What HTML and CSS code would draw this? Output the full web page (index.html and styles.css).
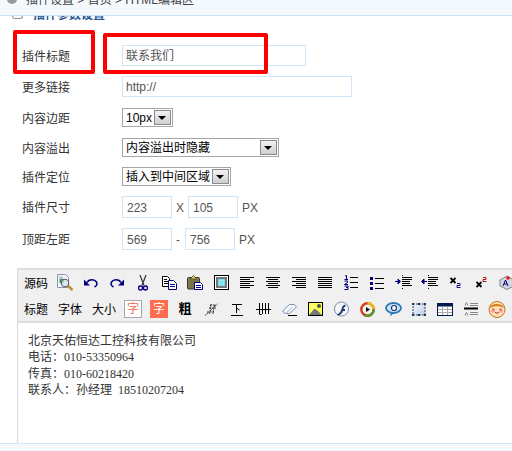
FILE: index.html
```html
<!DOCTYPE html>
<html lang="zh">
<head>
<meta charset="utf-8">
<title>HTML编辑区</title>
<link rel="stylesheet" href="styles.css">
</head>
<body>
<div class="page">
  <header class="crumb"><span class="crumb-dot"></span><span class="crumb-text">插件设置 &gt; 首页 &gt; HTML编辑区</span></header>
  <div class="section"><span class="section-dot"></span><span class="section-text">插件参数设置</span></div>
  <form class="form">
    <div class="row row-title"><label class="lab">插件标题</label><span class="inp w184">联系我们</span></div>
    <div class="row row-link"><label class="lab">更多链接</label><span class="inp w230">http://</span></div>
    <div class="row row-pad"><label class="lab">内容边距</label><span class="sel w51"><span class="sel-v">10px</span><span class="sel-b"></span></span></div>
    <div class="row row-over"><label class="lab">内容溢出</label><span class="sel w157"><span class="sel-v">内容溢出时隐藏</span><span class="sel-b"></span></span></div>
    <div class="row row-pos"><label class="lab">插件定位</label><span class="sel w109"><span class="sel-v">插入到中间区域</span><span class="sel-b"></span></span></div>
    <div class="row row-size"><label class="lab">插件尺寸</label><span class="inp w50 tall">223</span><span class="sep sep-x">X</span><span class="inp w50 tall">105</span><span class="unit">PX</span></div>
    <div class="row row-top"><label class="lab">顶距左距</label><span class="inp w50 tall">569</span><span class="sep sep-d">-</span><span class="inp w50 tall">756</span><span class="unit">PX</span></div>
  </form>
  <section class="editor">
    <div class="toolbar">
      <div class="tb-row">
        <span class="tw">源码</span>
        <span class="ic first"><svg width="17" height="17" viewBox="0 0 17 17"><path d="M.5.5h8l3 3v10H.500z" fill="#f4f6fa" stroke="#8a94a8"/><path d="M2 3h4M2 5h3" stroke="#9aa4b8"/><circle cx="5" cy="7" r="2.600" fill="#3c9a5c"/><circle cx="8" cy="9" r="3.800" fill="#d8e8f4" fill-opacity=".75" stroke="#556"/><path d="M11 12l4.500 4" stroke="#c08a2c" stroke-width="2.400"/></svg></span>
        <span class="ic"><svg width="14" height="10" viewBox="0 0 14 10"><path d="M0 1.500v6h6z" fill="#000080"/><path d="M3 4.500c2-3.500 7.500-3.500 9.500-.5 1 1.800 0 3.800-2 5" fill="none" stroke="#000080" stroke-width="1.500"/></svg></span>
        <span class="ic"><svg width="14" height="10" viewBox="0 0 14 10"><path d="M14 1.500v6H8z" fill="#000080"/><path d="M11 4.500C9 1 3.500 1 1.500 4c-1 1.800 0 3.800 2 5" fill="none" stroke="#000080" stroke-width="1.500"/></svg></span>
        <span class="ic"><svg width="10" height="16" viewBox="0 0 10 16"><path d="M2 0l4 10.500M8 0L4 10.500" stroke="#333" stroke-width="1.200" fill="none"/><circle cx="2.500" cy="13" r="2" fill="none" stroke="#000080" stroke-width="1.400"/><circle cx="7.500" cy="13" r="2" fill="none" stroke="#000080" stroke-width="1.400"/></svg></span>
        <span class="ic"><svg width="15" height="14" viewBox="0 0 15 14"><path d="M.5.500h5l2 2v8H.5z" fill="#fff" stroke="#000"/><path d="M2 3.500h3M2 5.500h4M2 7.500h4" stroke="#000"/><path d="M6.500 4.500h5l3 3v6h-8z" fill="#fff" stroke="#000080"/><path d="M8 8.500h5M8 10.500h5" stroke="#000080"/></svg></span>
        <span class="ic"><svg width="16" height="15" viewBox="0 0 16 15"><rect x=".5" y="2.500" width="12" height="11.500" rx="1" fill="#8a7f4a" stroke="#333"/><path d="M2 4h9v9H2z" fill="#6e6a40" opacity=".6"/><path d="M4 3L6.500.5 9 3v1H4z" fill="#e8d040" stroke="#333" stroke-width=".7"/><path d="M7.500 7.500h6l2 2v5h-8z" fill="#fff" stroke="#000080"/><path d="M9 10.500h5M9 12.500h5" stroke="#000080"/></svg></span>
        <span class="ic"><svg width="15" height="15" viewBox="0 0 15 15"><rect x=".5" y=".5" width="14" height="14" fill="#fff" stroke="#000"/><rect x="2" y="2" width="11" height="11" fill="#777"/><rect x="4" y="4" width="7" height="7" fill="#3fd8e8"/><path d="M4 5.500h7M4 7.500h7M4 9.500h7M5.500 4v7M7.500 4v7M9.500 4v7" stroke="#c8f4f8" stroke-width=".6"/></svg></span>
        <span class="ic"><svg width="14" height="12" viewBox="0 0 14 12"><path d="M0 .5h14M0 2.500h10M0 4.500h14M0 6.500h10M0 8.500h14M0 10.500h10" stroke="#000" fill="none"/></svg></span>
        <span class="ic"><svg width="14" height="12" viewBox="0 0 14 12"><path d="M0 .5h14M2 2.500h10M0 4.500h14M2 6.500h10M0 8.500h14M2 10.500h10" stroke="#000" fill="none"/></svg></span>
        <span class="ic"><svg width="14" height="12" viewBox="0 0 14 12"><path d="M0 .5h14M4 2.500h10M0 4.500h14M4 6.500h10M0 8.500h14M4 10.500h10" stroke="#000" fill="none"/></svg></span>
        <span class="ic"><svg width="14" height="12" viewBox="0 0 14 12"><path d="M0 .5h14M0 2.500h14M0 4.500h14M0 6.500h14M0 8.500h14M0 10.500h14" stroke="#000" fill="none"/></svg></span>
        <span class="ic"><svg width="14" height="15" viewBox="0 0 14 15"><path d="M6 2.500h8M6 7.500h8M6 12.500h8" stroke="#000"/><path d="M1 1l1.500-.5V4M.5 4.500h3.500M.5 6H3.500V7.500L.5 9.500h3.500M.5 11h3.500v1.500H2M4 12.500v2H.5" stroke="#000080" fill="none"/></svg></span>
        <span class="ic"><svg width="14" height="14" viewBox="0 0 14 14"><path d="M5 2.500h9M5 7.500h9M5 12.500h9" stroke="#000"/><rect y="1" width="3" height="3" fill="#000080"/><rect y="6" width="3" height="3" fill="#000080"/><rect y="11" width="3" height="3" fill="#000080"/></svg></span>
        <span class="ic"><svg width="17" height="15" viewBox="0 0 17 15"><path d="M7.500 0v2M7.500 13v2" stroke="#000" stroke-dasharray="1"/><path d="M7 2.500h10M7 4.500h10M7 6.500h8M7 8.500h8M7 10.500h10" stroke="#000"/><path d="M0 6.500h4M3 4l2.500 2.500L3 9z" fill="#000080" stroke="#000080"/></svg></span>
        <span class="ic"><svg width="17" height="15" viewBox="0 0 17 15"><path d="M7.500 0v2M7.500 13v2" stroke="#000" stroke-dasharray="1"/><path d="M7 2.500h10M7 4.500h10M7 6.500h8M7 8.500h8M7 10.500h10" stroke="#000"/><path d="M6 6.500H2M3 4L.5 6.500 3 9z" fill="#000080" stroke="#000080"/></svg></span>
        <span class="ic"><svg width="11" height="11" viewBox="0 0 11 11"><path d="M.5 1l5 5M5.500 1l-5 5" stroke="#000" stroke-width="1.800"/><path d="M7 6.500h3V8.500H7V10.500h3.500" stroke="#000080" stroke-width=".9" fill="none"/></svg></span>
        <span class="ic"><svg width="11" height="11" viewBox="0 0 11 11"><path d="M.5 5l5 5M5.500 5l-5 5" stroke="#000" stroke-width="1.800"/><path d="M7 .5h3v2H7v2h3.500" stroke="#a00000" stroke-width=".9" fill="none"/></svg></span>
        <span class="ic"><svg width="16" height="15" viewBox="0 0 16 15"><path d="M1 5l7-4 7 4v6l-7 3.500L1 11z" fill="#d4d4e0" stroke="#888"/><path d="M4 11l2.500-6L9 11M5 9h3" stroke="#000080" fill="none"/><circle cx="9" cy="3" r="1.800" fill="#e01818"/></svg></span>
      </div>
      <div class="tb-row">
        <span class="tw">标题</span>
        <span class="tw">字体</span>
        <span class="tw">大小</span>
        <span class="ic box-cell first2"><span class="zi zi-o">字</span></span>
        <span class="ic box-cell"><span class="zi zi-f">字</span></span>
        <span class="ic"><b class="cu">粗</b></span>
        <span class="ic"><svg width="13" height="13" viewBox="0 0 13 13"><path d="M0 12.500L4 9M5.500 7.500L12.500 1M5 2h6M4 5h7M2 9h7M6 1.500L4.500 11M9.500 2L8 11" stroke="#222" stroke-width=".9" stroke-dasharray="2 .7" fill="none"/></svg></span>
        <span class="ic"><svg width="12" height="13" viewBox="0 0 12 13"><path d="M1 1.500h10M5.500 1.500v8.500M5.500 5l3 2M0 12.500h12" stroke="#000" fill="none"/></svg></span>
        <span class="ic"><svg width="15" height="12" viewBox="0 0 15 12"><path d="M3.500 0v11M6.500 0v11M9.500 0v11M12.500 0v11M0 6.500h15M3.500 11.500h2" stroke="#000" fill="none"/></svg></span>
        <span class="ic"><svg width="15" height="13" viewBox="0 0 15 13"><path d="M.5 8l7-6.500 5 0 2 2.500-7 6.500H3z" fill="#f2f5fa" stroke="#7a94b4"/><path d="M.5 8l3 3L10 4.500" fill="none" stroke="#9ab0c8"/><path d="M6 12.500h9" stroke="#000"/></svg></span>
        <span class="ic"><svg width="15" height="14" viewBox="0 0 15 14"><rect x=".5" y=".5" width="14" height="13" fill="#ffff60" stroke="#000"/><circle cx="11" cy="4" r="2" fill="#554"/><path d="M1 13l5.500-6.500L10 9l4 4z" fill="#777"/></svg></span>
        <span class="ic"><svg width="15" height="16" viewBox="0 0 15 16"><circle cx="7.500" cy="8" r="7" fill="#f4f6fa" stroke="#7a90a8"/><path d="M3.500 13c2.500-.5 3.500-3 4-5 .5-2.500 1.500-4 4-4.500v2C10 6 9.500 7 9.500 8H11v2H9c-.8 2.500-2.500 4-5.500 4.500z" fill="#1a3a70"/></svg></span>
        <span class="ic"><svg width="15" height="15" viewBox="0 0 15 15"><circle cx="7.500" cy="7.500" r="6.200" fill="none" stroke="#d83a18" stroke-width="2.400"/><path d="M7.500 1.300a6.200 6.200 0 0 1 6.200 6.200" fill="none" stroke="#f0b818" stroke-width="2.400"/><path d="M13.700 7.500A6.200 6.200 0 0 1 5 13.200" fill="none" stroke="#48a030" stroke-width="2.400"/><circle cx="7.500" cy="7.500" r="4.300" fill="#f4f4ec"/><path d="M6 5l4 2.500L6 10z" fill="#111"/></svg></span>
        <span class="ic"><svg width="17" height="15" viewBox="0 0 17 15"><ellipse cx="8.500" cy="6" rx="7.500" ry="5" fill="#cfe2f2" stroke="#2a78b8" stroke-width="1.800"/><circle cx="9" cy="6" r="2.500" fill="#fff" stroke="#123a70" stroke-width="1.200"/><path d="M6 10l-1 4.500 4.500-4z" fill="#2a78b8"/></svg></span>
        <span class="ic"><svg width="16" height="15" viewBox="0 0 16 15"><defs><linearGradient id="gr" x1="0" y1="0" x2="1" y2="1"><stop offset="0" stop-color="#f0f4fc"/><stop offset="1" stop-color="#bcd0ec"/></linearGradient></defs><rect x="2" y="2" width="12" height="11" fill="url(#gr)"/><path d="M2 2h12v11H2z" fill="none" stroke="#445" stroke-dasharray="2 1"/><path d="M1 1h2v2H1zM7 1h2v2H7zM13 1h2v2h-2zM1 12h2v2H1zM7 12h2v2H7zM13 12h2v2h-2z" fill="#123a6a"/></svg></span>
        <span class="ic"><svg width="16" height="13" viewBox="0 0 16 13"><rect x=".5" y=".5" width="15" height="12" fill="#fff" stroke="#001a50"/><rect x="0" y="0" width="16" height="3.500" fill="#001a50"/><path d="M1 6.500h14M1 9.500h14M5.500 4v8M10.500 4v8" stroke="#aaa"/></svg></span>
        <span class="ic"><svg width="14" height="14" viewBox="0 0 14 14"><path d="M0 6.500h14" stroke="#000" stroke-width="2"/><path d="M1 3.500l1.500-3 1.500 3M1 13.500l1.500-3 1.500 3M6 1.500h8M6 3.500h8M6 10.500h8M6 12.500h8" stroke="#888" fill="none"/></svg></span>
        <span class="ic"><svg width="18" height="17" viewBox="0 0 18 17"><circle cx="9" cy="8.500" r="8" fill="#ffe0b0" stroke="#c8701c"/><path d="M1.500 7C3 2 14 1.500 16.500 7 12 4.500 6 4.500 1.500 7z" fill="#d8801c"/><circle cx="5" cy="10" r="1.800" fill="#ff90a8"/><circle cx="13" cy="10" r="1.800" fill="#ff90a8"/><path d="M4.500 8l2 .5M11.500 8.500l2-.5M7 11c1 1.500 3 1.500 4 0" stroke="#933" fill="none"/></svg></span>
      </div>
    </div>
    <div class="content">
      <p class="line">北京天佑恒达工控科技有限公司</p>
      <p class="line">电话：010-53350964</p>
      <p class="line">传真：010-60218420</p>
      <p class="line">联系人：孙经理&nbsp; 18510207204</p>
    </div>
  </section>
  <div class="foot"></div>
  <div class="mark mark-a"></div>
  <div class="mark mark-b"></div>
</div>
</body>
</html>
```

FILE: styles.css
```css
* { box-sizing: border-box; }
html, body { margin: 0; padding: 0; background: #fff; }
body { font: 12px/16px "Liberation Sans", "Noto Sans CJK SC", sans-serif; color: #333; overflow: hidden; }
.page { position: relative; width: 512px; height: 451px; overflow: hidden; }

.crumb { height: 16px; background: #f3f9fc; border-bottom: 1px solid #c9e2f5; display: flex; padding-left: 7px; overflow: hidden; }
.crumb-dot { width: 10px; height: 10px; margin-top: -6px; border-radius: 50%; background: #999; flex: none; }
.crumb-text { margin: -8px 0 0 9px; color: #444; white-space: nowrap; }
.section { height: 5px; overflow: hidden; display: flex; padding-left: 12px; }
.section-dot { width: 11px; height: 3px; border: 1px solid #8a9aa8; border-top: 0; border-radius: 0 0 5px 5px; flex: none; }
.section-text { margin: -9px 0 0 10px; font-weight: bold; color: #2a5a96; white-space: nowrap; }

.form { padding: 24px 0 0 22px; }
.row { display: flex; align-items: center; }
.lab { width: 100px; flex: none; padding-top: 2px; }
.inp { display: block; height: 21px; line-height: 21px; border: 1px solid #cfe5fa; padding: 0 3px; color: #555; flex: none; background: #fff; }
.tall { height: 22px; line-height: 22px; padding-left: 4px; }
.w184 { width: 184px; }
.w230 { width: 230px; }
.w50 { width: 50px; }
.sel { display: flex; height: 19px; border: 1px solid #a5a5a5; flex: none; color: #000; background: #fff; line-height: 18px; }
.sel-v { flex: 1; padding-left: 3px; white-space: nowrap; overflow: hidden; }
.sel-b { width: 17px; flex: none; position: relative; margin: 1px; background: linear-gradient(#f2f2f2, #cfcfcf); border: 1px solid #8a8a8a; }
.sel-b::after { content: ""; position: absolute; left: 3px; top: 5px; border: 4px solid transparent; border-top: 4px solid #000; border-bottom: 0; }
.w51 { width: 51px; }
.w157 { width: 157px; }
.w109 { width: 109px; }
.sep { flex: none; color: #555; padding-top: 1px; }
.sep-x { width: 16px; padding-left: 4px; }
.sep-d { width: 13px; padding-left: 4px; }
.unit { margin-left: 4px; color: #555; padding-top: 1px; }
.row-link { margin-top: 10px; }
.row-pad { margin-top: 11px; }
.row-over { margin-top: 11px; }
.row-pos { margin-top: 10px; }
.row-size { margin-top: 10px; }
.row-top { margin-top: 10px; }

.editor { margin: 18px 0 0 17px; width: 495px; border-left: 1px solid #dcdcdc; }
.toolbar { height: 55px; background: #f0f0f0; border-top: 2px solid #dedede; border-bottom: 2px solid #dedede; padding: 0 0 0 6px; }
.tb-row { height: 26px; display: flex; align-items: center; white-space: nowrap; color: #000; }
.tb-row:first-child { height: 25px; margin-bottom: 1px; }
.tw { width: 24px; margin-right: 10px; flex: none; padding-top: 2px; }
.tw + .ic.first { margin-left: -6px; }
.ic { width: 26px; height: 24px; flex: none; display: flex; align-items: center; justify-content: center; }
.first2 { margin-left: -6px; }
.zi { width: 18px; height: 18px; line-height: 17px; text-align: center; display: block; }
.zi-o { background: #fff; border: 1px solid #a8a8a8; color: #f06a50; }
.zi-f { background: #ff6c50; color: #fff; line-height: 18px; }
.cu { font-size: 13px; color: #000; }
.content { height: 120px; padding: 10px 0 0 10px; font-family: "Liberation Serif", "Noto Sans CJK SC", serif; color: #333; }
.line { margin: 0; line-height: 16.4px; }
.foot { height: 8px; border-top: 1px solid #d4e6f4; background: #f3f9fc; }

.mark { position: absolute; border: 4px solid #f00; border-radius: 2px; }
.mark-a { left: 13px; top: 30px; width: 82px; height: 44px; }
.mark-b { left: 103px; top: 33px; width: 165px; height: 41px; }
```
